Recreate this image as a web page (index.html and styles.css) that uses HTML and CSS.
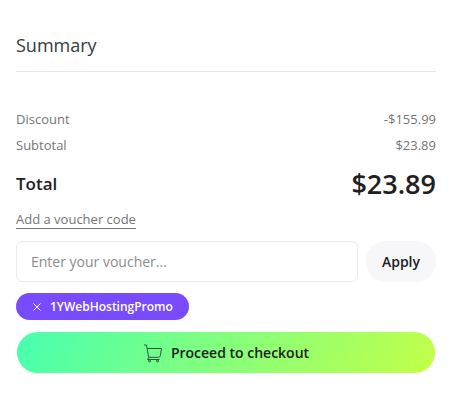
FILE: index.html
```
<!DOCTYPE html>
<html lang="en">
<head>
    <meta charset="UTF-8">
    <meta name="viewport" content="width=device-width, initial-scale=1.0">
    <title>Order Summary</title>
    <link rel="stylesheet" href="styles.css">
</head>
<body>
    <section class="summary">
        <h1 class="summary-title">Summary</h1>

        <dl class="price-list">
            <div class="price-row">
                <dt>Discount</dt>
                <dd>-$155.99</dd>
            </div>
            <div class="price-row">
                <dt>Subtotal</dt>
                <dd>$23.89</dd>
            </div>
            <div class="price-row total-row">
                <dt>Total</dt>
                <dd>$23.89</dd>
            </div>
        </dl>

        <a href="#voucher" class="voucher-link">Add a voucher code</a>

        <form class="voucher-form">
            <input type="text" id="voucher" class="voucher-input" placeholder="Enter your voucher..." aria-label="Voucher code">
            <button type="button" class="apply-button">Apply</button>
        </form>

        <button type="button" class="promo-tag" aria-label="Remove 1YWebHostingPromo">
            <svg class="promo-close" viewBox="0 0 10 10" aria-hidden="true">
                <path d="M1.500 1.500l7 7M8.500 1.500l-7 7"/>
            </svg>
            <span>1YWebHostingPromo</span>
        </button>

        <button type="button" class="checkout-button">
            <svg class="cart-icon" viewBox="0 0 20 20" aria-hidden="true">
                <path d="M1 2h2.500l2.200 12.300M4.200 5.500h14.300l-1.200 7.200q-.2 1.600-1.800 1.600H5.700L4.500 16.500h12"/>
                <circle cx="6.500" cy="18" r="1"/>
                <circle cx="14.500" cy="18" r="1"/>
            </svg>
            <span>Proceed to checkout</span>
        </button>
    </section>
</body>
</html>
```
FILE: styles.css
```
* {
    box-sizing: border-box;
}
body {
    margin: 0;
    background-color: #fff;
    color: #1f2024;
    font-family: "Open Sans", "Noto Sans", sans-serif;
    font-size: 13px;
}
.summary {
    display: flex;
    flex-direction: column;
    align-items: flex-start;
    padding: 32px 31px 32px 16px;
}
.summary-title {
    align-self: stretch;
    margin: 0 0 34px;
    padding-bottom: 12px;
    border-bottom: 1px solid #e6e6e6;
    color: #2f3c40;
    font-size: 18px;
    font-weight: 400;
    line-height: 27px;
}
.price-list {
    align-self: stretch;
    margin: 0;
}
.price-row {
    display: flex;
    justify-content: space-between;
    align-items: center;
    color: #757575;
    line-height: 26px;
}
.price-row dd {
    margin: 0;
}
.total-row {
    color: #1f2024;
    font-size: 17px;
    font-weight: 600;
    line-height: 52px;
}
.total-row dd {
    font-size: 27px;
}
.voucher-link {
    border-bottom: 1px solid #757575;
    color: #757575;
    line-height: 18px;
    text-decoration: none;
}
.voucher-form {
    display: flex;
    align-self: stretch;
    gap: 8px;
    margin: 12px 0 11px;
}
.voucher-input {
    flex: 1;
    min-width: 0;
    height: 41px;
    padding: 0 14px;
    border: 1px solid #ebebeb;
    border-radius: 6px;
    color: #1f2024;
    font-family: inherit;
    font-size: 14px;
}
.voucher-input::placeholder {
    color: #8c8c8c;
}
.apply-button {
    height: 41px;
    padding: 0 16px;
    border: none;
    border-radius: 20px;
    background-color: #f7f7fa;
    color: #1f2024;
    font-family: inherit;
    font-size: 14px;
    font-weight: 600;
    cursor: pointer;
}
.promo-tag {
    display: flex;
    align-items: center;
    gap: 8px;
    height: 27px;
    margin-bottom: 12px;
    padding: 0 16px;
    border: none;
    border-radius: 14px;
    background-color: #784bff;
    color: #fff;
    font-family: inherit;
    font-size: 12px;
    font-weight: 600;
    cursor: pointer;
}
.promo-close {
    width: 10px;
    height: 10px;
    fill: none;
    stroke: #fff;
    stroke-width: 1;
}
.checkout-button {
    display: flex;
    align-self: stretch;
    justify-content: center;
    align-items: center;
    gap: 8px;
    height: 41px;
    margin: 0 1px;
    border: none;
    border-radius: 21px;
    background: linear-gradient(120deg, #47ffb0, #c3ff47);
    color: #1f2024;
    font-family: inherit;
    font-size: 14px;
    font-weight: 600;
    cursor: pointer;
}
.cart-icon {
    width: 20px;
    height: 20px;
    fill: none;
    stroke: #2a5a3a;
    stroke-width: 1;
}
```
